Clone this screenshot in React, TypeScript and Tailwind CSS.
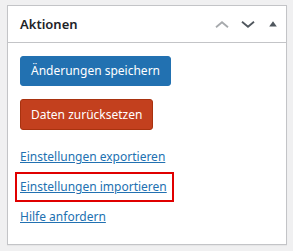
export default function App() {
  const font = { fontFamily: '"Noto Sans", "Open Sans", sans-serif' };
  return (
    <div className="min-h-[251px] w-[293px] bg-[#f0f0f1] pt-[5px] pl-[7px]" style={font}>
      <div className="w-[280px] h-[240px] border border-[#c3c4c7] bg-white shadow-[0_1px_1px_rgba(0,0,0,0.04)]">
        {/* Header */}
        <div className="h-[37px] flex items-center justify-between border-b border-[#c3c4c7] pl-[12px] pr-[6px]">
          <h2 className="text-[13px] font-semibold text-[#1d2327] leading-none">Aktionen</h2>
          <div className="flex items-center">
            <span className="w-[26px] h-[36px] flex items-center justify-center">
              <svg width="14" height="7" viewBox="0 0 14 7" fill="none">
                <path d="M1 6.3L7 1.2L13 6.3" stroke="#a7aaad" strokeWidth="1.8" />
              </svg>
            </span>
            <span className="w-[25px] h-[36px] flex items-center justify-center">
              <svg width="14" height="7" viewBox="0 0 14 7" fill="none">
                <path d="M1 0.7L7 5.8L13 0.7" stroke="#50575e" strokeWidth="1.8" />
              </svg>
            </span>
            <span className="ml-[6px] w-[14px] h-[36px] flex items-center justify-center">
              <svg width="8" height="6" viewBox="0 0 8 6">
                <path d="M4 0.3L7.8 5.5H0.2Z" fill="#50575e" />
              </svg>
            </span>
          </div>
        </div>

        {/* Body */}
        <div className="px-[12px] pt-[13px] flex flex-col items-start">
          <button className="h-[30px] px-[10px] rounded-[3px] bg-[#2271b1] border border-[#2271b1] text-white text-[12px] leading-none whitespace-nowrap">
            Änderungen speichern
          </button>
          <button className="mt-[13px] h-[31px] px-[10px] rounded-[3px] bg-[#c3401e] border border-[#a8320f] text-white text-[12px] leading-none whitespace-nowrap">
            Daten zurücksetzen
          </button>

          <div className="mt-[12px] flex flex-col">
            <div className="h-[30px] flex items-center">
              <a href="#" className="text-[12px] text-[#2271b1] underline whitespace-nowrap">Einstellungen exportieren</a>
            </div>
            <div className="h-[30px] -ml-[5px] pl-[3px] w-[159px] border-2 border-[#e00000] flex items-center">
              <a href="#" className="text-[12px] text-[#2271b1] underline whitespace-nowrap">Einstellungen importieren</a>
            </div>
            <div className="h-[30px] flex items-center">
              <a href="#" className="text-[12px] text-[#2271b1] underline whitespace-nowrap">Hilfe anfordern</a>
            </div>
          </div>
        </div>
      </div>
    </div>
  );
}
